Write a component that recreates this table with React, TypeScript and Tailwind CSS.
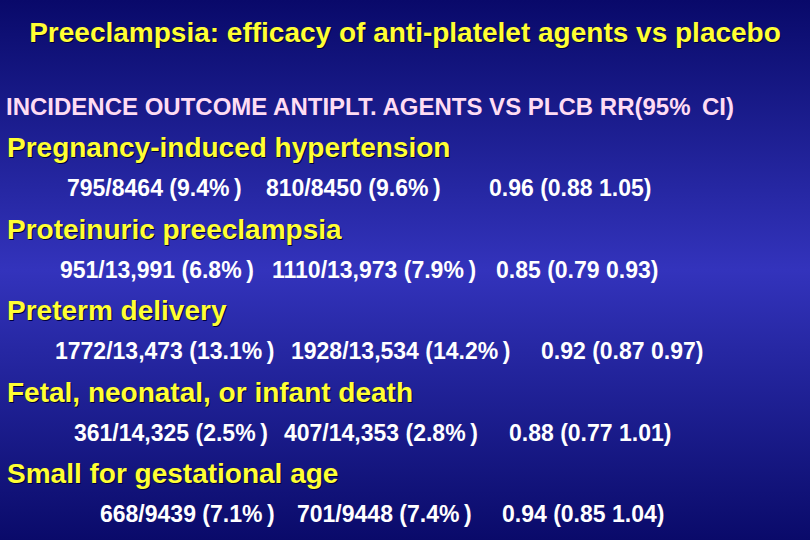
import React from "react";

type Row = {
  heading: string;
  cells: [string, string, string];
  pad: string;
  w1: string;
  w2: string;
};

const rows: Row[] = [
  {
    heading: "Pregnancy-induced hypertension",
    cells: ["795/8464 (9.4%\u2009)", "810/8450 (9.6%\u2009)", "0.96 (0.88 1.05)"],
    pad: "pl-[67px]",
    w1: "w-[199px]",
    w2: "w-[223px]",
  },
  {
    heading: "Proteinuric preeclampsia",
    cells: ["951/13,991 (6.8%\u2009)", "1110/13,973 (7.9%\u2009)", "0.85 (0.79 0.93)"],
    pad: "pl-[60px]",
    w1: "w-[212px]",
    w2: "w-[224px]",
  },
  {
    heading: "Preterm delivery",
    cells: ["1772/13,473 (13.1%\u2009)", "1928/13,534 (14.2%\u2009)", "0.92 (0.87 0.97)"],
    pad: "pl-[55px]",
    w1: "w-[236px]",
    w2: "w-[250px]",
  },
  {
    heading: "Fetal, neonatal, or infant death",
    cells: ["361/14,325 (2.5%\u2009)", "407/14,353 (2.8%\u2009)", "0.88 (0.77 1.01)"],
    pad: "pl-[74px]",
    w1: "w-[210px]",
    w2: "w-[225px]",
  },
  {
    heading: "Small for gestational age",
    cells: ["668/9439 (7.1%\u2009)", "701/9448 (7.4%\u2009)", "0.94 (0.85 1.04)"],
    pad: "pl-[100px]",
    w1: "w-[197px]",
    w2: "w-[205px]",
  },
];

function Section({ row }: { row: Row }) {
  return (
    <div className="h-[81.5px] shrink-0">
      <div className="h-[40px] pl-[7px] text-[28px] leading-[40px] font-bold text-[#ffff33] [text-shadow:1px_1px_0_#00003a] whitespace-nowrap">
        {row.heading}
      </div>
      <div className={`flex h-[41px] text-[23px] leading-[41px] font-bold text-white whitespace-nowrap ${row.pad}`}>
        <span className={`shrink-0 ${row.w1}`}>{row.cells[0]}</span>
        <span className={`shrink-0 ${row.w2}`}>{row.cells[1]}</span>
        <span className="shrink-0">{row.cells[2]}</span>
      </div>
    </div>
  );
}

export default function App() {
  return (
    <div className="w-[810px] h-[540px] overflow-hidden flex flex-col bg-linear-to-b from-[#09096a] via-[#3333bc] to-[#0a0a6a] font-['Liberation_Sans',Arial,sans-serif]">
      <div className="pt-[17px] h-[49px] text-center text-[28px] leading-[32px] font-bold text-[#ffff33] [text-shadow:1px_1px_0_#00003a] whitespace-nowrap">
        Preeclampsia: efficacy of anti-platelet agents vs placebo
      </div>
      <div className="mt-[43px] h-[30px] pl-[6px] text-[24px] leading-[30px] font-bold text-[#ffdcf3] whitespace-nowrap">
        INCIDENCE OUTCOME ANTIPLT. AGENTS VS PLCB RR(95%{"\u2009 "}CI)
      </div>
      <div className="mt-[6px] flex flex-col">
        {rows.map((r) => (
          <Section key={r.heading} row={r} />
        ))}
      </div>
    </div>
  );
}
